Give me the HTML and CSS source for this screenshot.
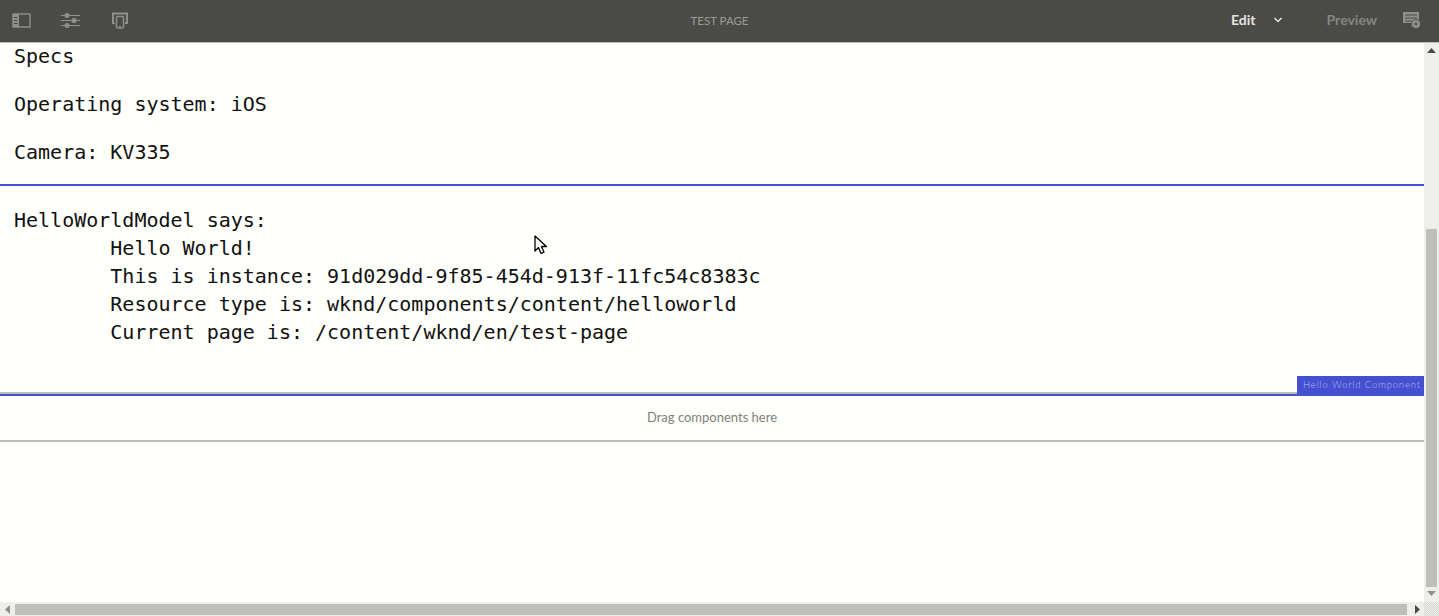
FILE: index.html
```html
<!DOCTYPE html>
<html lang="en">
<head>
  <meta charset="UTF-8" />
  <title>TEST PAGE</title>
  <link rel="stylesheet" href="styles.css">
</head>
<body>

  <!-- top bar -->
  <header class="topbar">
    <div class="tools">
      <svg class="tool" width="19" height="15" viewBox="0 0 19 15" fill="none">
        <rect x="1" y="1" width="17" height="13" stroke="#8f908c" stroke-width="1.400"/>
        <rect x="1" y="1" width="6" height="13" fill="#8f908c"/>
        <path d="M2 4.500h3.500M2 7.500h3.500M2 10.500h3.500" stroke="#4a4b46" stroke-width="1"/>
      </svg>
      <svg class="tool" width="19" height="15" viewBox="0 0 19 15" fill="#8f908c">
        <path d="M0 2.500h19M0 7.500h19M0 12.500h19" stroke="#8f908c" stroke-width="1" fill="none"/>
        <circle cx="6" cy="2.500" r="2.500"/>
        <circle cx="13" cy="7.500" r="2.500"/>
        <circle cx="6" cy="12.500" r="2.500"/>
      </svg>
      <svg class="tool tool-device" width="18" height="17" viewBox="0 0 18 17" fill="none" stroke="#8f908c">
        <path d="M2 11V1.500h14V11h-2" stroke-width="2"/>
        <path d="M1 11.500h3" stroke-width="1.200"/>
        <rect x="4.500" y="3.500" width="9" height="13" fill="#4a4b46" stroke="#4a4b46" stroke-width="1"/>
        <rect x="5.500" y="4.500" width="7" height="11.500" rx="1" stroke-width="1.500"/>
        <path d="M8 14.500h2" stroke-width="1"/>
      </svg>
    </div>
    <div class="page-title">TEST PAGE</div>
    <div class="modes">
      <span class="mode-edit">Edit</span>
      <svg class="chevron" width="10" height="6" viewBox="0 0 10 6" fill="none">
        <path d="M1.500 1l3.500 3.500L8.500 1" stroke="#e4e4e0" stroke-width="1.500"/>
      </svg>
      <span class="mode-preview">Preview</span>
      <svg class="add-icon" width="18" height="17" viewBox="0 0 18 17">
        <path d="M0 0h16v11h-5l-3 4.500V11H0z" fill="#8f908c"/>
        <path d="M2 3h12M2 6h12M2 9h7" stroke="#4a4b46" stroke-width="1"/>
        <circle cx="13" cy="12" r="4.500" fill="#9a9b97" stroke="#4a4b46"/>
        <path d="M10.500 12h5M13 9.500v5" stroke="#4a4b46" stroke-width="1"/>
      </svg>
    </div>
  </header>

  <div class="frame">
    <div class="viewport">
      <main class="content">
        <section class="specs">
          <p>Specs</p>
          <p>Operating system: iOS</p>
          <p>Camera: KV335</p>
        </section>

        <section class="component">
<pre class="hello">HelloWorldModel says:
	Hello World!
	This is instance: 91d029dd-9f85-454d-913f-11fc54c8383c
	Resource type is: wknd/components/content/helloworld
	Current page is: /content/wknd/en/test-page</pre>
          <span class="component-label">Hello World Component</span>
        </section>

        <div class="dropzone">Drag components here</div>

        <!-- mouse pointer -->
        <svg class="pointer" width="14" height="21" viewBox="0 0 14 21">
          <path d="M1 1v15l3.500-3.500 2.500 6 3-1.300-2.500-5.700H12.500z" fill="#fff" stroke="#000" stroke-width="1.300" stroke-linejoin="round"/>
        </svg>
      </main>

      <div class="vscroll">
        <svg class="arrow" width="9" height="5" viewBox="0 0 9 5"><path d="M4.500 0L9 5H0z" fill="#4a4b46"/></svg>
        <div class="vspace"></div>
        <div class="vthumb"></div>
        <svg class="arrow" width="9" height="5" viewBox="0 0 9 5"><path d="M0 0h9L4.500 5z" fill="#8f908c"/></svg>
      </div>
    </div>

    <div class="hscroll">
      <svg class="arrow" width="5" height="9" viewBox="0 0 5 9"><path d="M5 0v9L0 4.500z" fill="#8f908c"/></svg>
      <div class="hthumb"></div>
      <svg class="arrow" width="5" height="9" viewBox="0 0 5 9"><path d="M0 0l5 4.500L0 9z" fill="#4a4b46"/></svg>
      <div class="corner"></div>
    </div>
  </div>

</body>
</html>
```

FILE: styles.css
```css
html, body {
  height: 100%;
}

body {
  margin: 0;
  display: flex;
  flex-direction: column;
  overflow: hidden;
  background-color: #fffffb;
}

.topbar {
  height: 42px;
  padding-bottom: 2px;
  box-sizing: border-box;
  flex: none;
  display: flex;
  align-items: center;
  justify-content: space-between;
  position: relative;
  z-index: 1;
  background-color: #4a4b46;
  box-shadow: 0 1px 0 #bfbfba;
  font-family: Lato, sans-serif;
}

.tools {
  display: flex;
  align-items: center;
  gap: 30px;
  padding-left: 12px;
}

.tool-device {
  margin-left: 1px;
}

.page-title {
  position: absolute;
  left: 0;
  right: 0;
  text-align: center;
  font-size: 11.500px;
  color: #9a9b97;
}

.modes {
  display: flex;
  align-items: center;
  padding-right: 18px;
  font-size: 14px;
  font-weight: 700;
}

.mode-edit {
  margin-bottom: 2px;
  color: #e4e4e0;
}

.chevron {
  margin-left: 17px;
}

.mode-preview {
  margin-left: 44px;
  margin-bottom: 2px;
  color: #858682;
}

.add-icon {
  margin-left: 26px;
}

.frame {
  flex: 1;
  min-height: 0;
  display: flex;
  flex-direction: column;
}

.viewport {
  flex: 1;
  min-height: 0;
  display: flex;
}

.content {
  flex: 1;
  position: relative;
  font-family: "DejaVu Sans Mono", monospace;
  font-size: 20px;
  line-height: 28px;
  color: #111;
}

.specs {
  padding: 0 14px 18px;
}

.specs p {
  margin: 0 0 20px;
}

.specs p:last-child {
  margin-bottom: 0;
}

.component {
  position: relative;
  height: 188px;
  padding: 20px 14px 0;
  border-top: 2px solid #4450cf;
  border-bottom: 2px solid #4450cf;
  box-shadow: inset 0 -2px 0 #bfbfba;
}

.hello {
  margin: 0;
  font: inherit;
  tab-size: 8;
}

.component-label {
  position: absolute;
  right: 0;
  bottom: -2px;
  width: 127px;
  height: 20px;
  padding-left: 6px;
  box-sizing: border-box;
  background-color: #4450cf;
  color: #b7bbf0;
  font-family: Lato, sans-serif;
  font-size: 9.500px;
  font-weight: 300;
  line-height: 18px;
  letter-spacing: 0.850px;
  white-space: nowrap;
}

.dropzone {
  height: 44px;
  border-bottom: 2px solid #bfbfba;
  font-family: Lato, sans-serif;
  font-size: 13px;
  line-height: 43px;
  text-align: center;
  color: #7f807c;
}

.pointer {
  position: absolute;
  left: 534px;
  top: 193px;
}

.vscroll {
  width: 15px;
  flex: none;
  display: flex;
  flex-direction: column;
  align-items: center;
  padding: 6px 0;
  box-sizing: border-box;
  background-color: #eeeeeb;
}

.vspace {
  height: 176px;
}

.vthumb {
  flex: 1;
  width: 11px;
  margin-bottom: 4px;
  background-color: #bfbfba;
}

.hscroll {
  height: 14px;
  flex: none;
  display: flex;
  align-items: center;
  padding-left: 5px;
  background-color: #eeeeeb;
}

.hthumb {
  width: 1392px;
  height: 11px;
  margin-top: 1px;
  margin-left: 5px;
  background-color: #bfbfba;
}

.hscroll .arrow:nth-child(3) {
  margin-left: 8px;
}

.corner {
  flex: 1;
  align-self: stretch;
  margin-left: 4px;
  background: repeating-conic-gradient(#d4d4d0 0 25%, #eeeeeb 0 50%) 0 0 / 2px 2px;
}
```
